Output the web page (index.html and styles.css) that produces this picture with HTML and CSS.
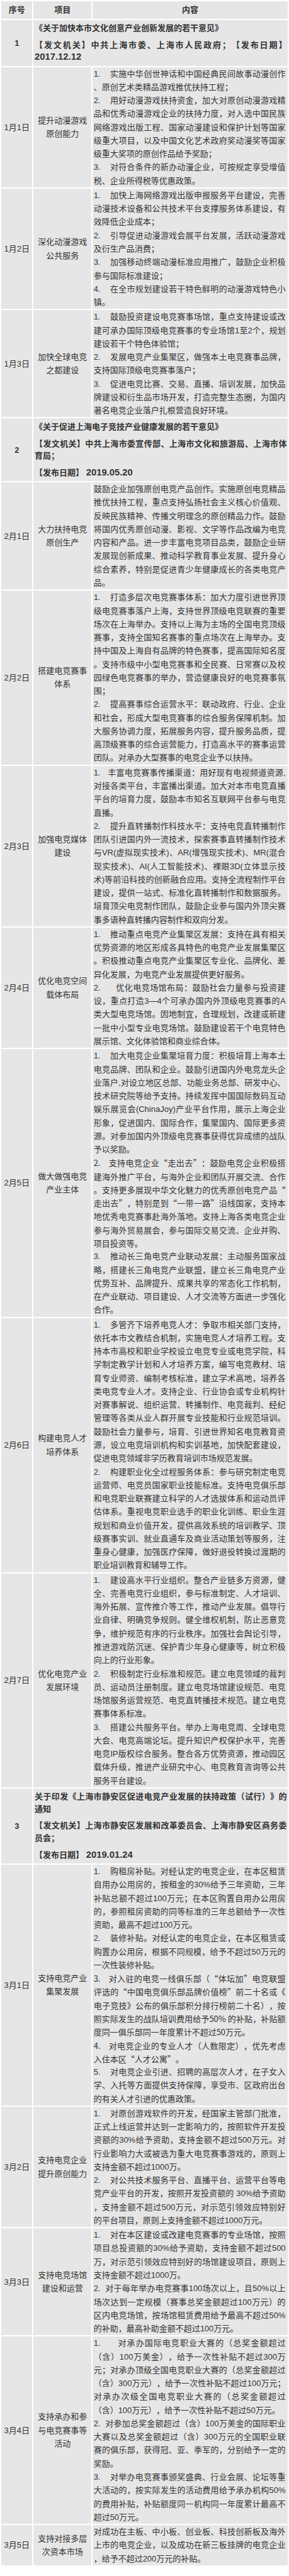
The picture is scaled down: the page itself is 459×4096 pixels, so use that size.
FILE: index.html
```html
<!DOCTYPE html>
<html lang="zh-CN">
<head>
<meta charset="utf-8">
<title>电竞产业扶持政策</title>
<link rel="stylesheet" href="styles.css">
</head>
<body>
<table class="policy">
  <colgroup>
    <col class="c-no">
    <col class="c-item">
    <col class="c-text">
  </colgroup>
  <thead>
    <tr>
      <th>序号</th>
      <th>项目</th>
      <th>内容</th>
    </tr>
  </thead>
  <tbody>
    <tr>
      <td class="num">1</td>
      <td class="doc" colspan="2">
        <p>《关于加快本市文化创意产业创新发展的若干意见》</p>
        <p>【发文机关】中共上海市委、上海市人民政府；【发布日期】<span class="date">2017.12.12</span></p>
      </td>
    </tr>
    <tr>
      <td class="day">1月1日</td>
      <td class="item">提升动漫游戏原创能力</td>
      <td class="text">
        <p>1.&nbsp;&nbsp;&nbsp;&nbsp;实施中华创世神话和中国经典民间故事动漫创作、原创艺术类精品游戏推优扶持工程；</p>
        <p>2.&nbsp;&nbsp;&nbsp;&nbsp;用好动漫游戏扶持资金，加大对原创动漫游戏精品和优秀动漫游戏企业的扶持力度，对入选中国民族网络游戏出版工程、国家动漫建设和保护计划等国家级重大项目，以及中国文化艺术政府奖动漫奖等国家级重大奖项的原创作品给予奖励；</p>
        <p>3.&nbsp;&nbsp;&nbsp;&nbsp;对符合条件的新办动漫企业，可按规定享受增值税、企业所得税等优惠政策。</p>
      </td>
    </tr>
    <tr>
      <td class="day">1月2日</td>
      <td class="item">深化动漫游戏公共服务</td>
      <td class="text">
        <p>1.&nbsp;&nbsp;&nbsp;&nbsp;加快上海网络游戏出版申报服务平台建设，完善动漫技术设备和公共技术平台支撑服务体系建设，有效降低企业成本；</p>
        <p>2.&nbsp;&nbsp;&nbsp;&nbsp;引导促进动漫游戏会展平台发展，活跃动漫游戏及衍生产品消费；</p>
        <p>3.&nbsp;&nbsp;&nbsp;&nbsp;加强移动终端动漫标准应用推广，鼓励企业积极参与国际标准建设；</p>
        <p>4.&nbsp;&nbsp;&nbsp;&nbsp;在全市规划建设若干特色鲜明的动漫游戏特色小镇。</p>
      </td>
    </tr>
    <tr>
      <td class="day">1月3日</td>
      <td class="item">加快全球电竞之都建设</td>
      <td class="text">
        <p>1.&nbsp;&nbsp;&nbsp;&nbsp;鼓励投资建设电竞赛事场馆，重点支持建设或改建可承办国际顶级电竞赛事的专业场馆1至2个，规划建设若干个特色体验馆；</p>
        <p>2.&nbsp;&nbsp;&nbsp;&nbsp;发展电竞产业集聚区，做强本土电竞赛事品牌，支持国际顶级电竞赛事落户；</p>
        <p>3.&nbsp;&nbsp;&nbsp;&nbsp;促进电竞比赛、交易、直播、培训发展，加快品牌建设和衍生品市场开发，打造完整生态圈，为国内著名电竞企业落户扎根营造良好环境。</p>
      </td>
    </tr>
    <tr>
      <td class="num">2</td>
      <td class="doc" colspan="2">
        <p>《关于促进上海电子竞技产业健康发展的若干意见》</p>
        <p>【发文机关】中共上海市委宣传部、上海市文化和旅游局、上海市体育局；</p>
        <p>【发布日期】 <span class="date">2019.05.20</span></p>
      </td>
    </tr>
    <tr>
      <td class="day">2月1日</td>
      <td class="item">大力扶持电竞原创生产</td>
      <td class="text">
        <p>鼓励企业加强原创电竞产品创作。实施原创电竞精品推优扶持工程，重点支持弘扬社会主义核心价值观、反映民族精神、传播文明理念的原创精品力作。鼓励将国内优秀原创动漫、影视、文学等作品改编为电竞内容和产品。进一步丰富电竞项目品类，鼓励企业研发展现创新成果、推动科学教育事业发展、提升身心综合素养，特别是促进青少年健康成长的各类电竞产品。</p>
      </td>
    </tr>
    <tr>
      <td class="day">2月2日</td>
      <td class="item">搭建电竞赛事体系</td>
      <td class="text">
        <p>1.&nbsp;&nbsp;&nbsp;&nbsp;打造多层次电竞赛事体系：加大力度引进世界顶级电竞赛事落户上海，支持世界顶级电竞联赛的重要场次在上海举办。支持以上海为主场的全国电竞顶级赛事，支持全国知名赛事的重点场次在上海举办。支持中国及上海自有品牌的特色赛事，提高国际知名度。支持市级中小型电竞赛事和全民赛、日常赛以及校园绿色电竞赛事的举办，营造健康良好的电竞赛事氛围；</p>
        <p>2.&nbsp;&nbsp;&nbsp;&nbsp;提高赛事综合运营水平：联动政府、行业、企业和社会，形成大型电竞赛事的综合服务保障机制。加大服务协调力度，拓展服务内容，提升服务品质，提高顶级赛事的综合运营能力，打造高水平的赛事运营团队。对承办大型赛事的电竞企业予以扶持。</p>
      </td>
    </tr>
    <tr>
      <td class="day">2月3日</td>
      <td class="item">加强电竞媒体建设</td>
      <td class="text">
        <p>1.&nbsp;&nbsp;&nbsp;丰富电竞赛事传播渠道：用好现有电视频道资源,对接各类平台，丰富播出渠道。加大对本市电竞直播平台的培育力度，鼓励本市知名互联网平台参与电竞直播。</p>
        <p>2.&nbsp;&nbsp;&nbsp;&nbsp;提升直转播制作科技水平：支持电竞直转播制作团队引进国内外一流技术，探索赛事直转播制作技术与VR(虚拟现实技术)、AR(增强现实技术)、MR(混合现实技术)、AI(人工智能技术)、裸眼3D(立体显示技术)等前沿科技的创新融合应用。支持全流程制作平台建设，提供一站式、标准化直转播制作和数据服务。培育顶尖电竞制作团队，鼓励企业参与国内外顶尖赛事多语种直转播内容制作和双向分发。</p>
      </td>
    </tr>
    <tr>
      <td class="day">2月4日</td>
      <td class="item">优化电竞空间载体布局</td>
      <td class="text">
        <p>1.&nbsp;&nbsp;&nbsp;&nbsp;推动重点电竞产业集聚区发展：支持在具有相关优势资源的地区形成各具特色的电竞产业发展集聚区。积极推动重点电竞产业集聚区专业化、品牌化、差异化发展，为电竞产业发展提供更好服务。</p>
        <p>2.&nbsp;&nbsp;&nbsp;&nbsp;&nbsp;&nbsp;优化电竞场馆布局：鼓励社会力量参与投资建设，重点打造3—4个可承办国内外顶级电竞赛事的A类大型电竞场馆。因地制宜，合理规划，改建或新建一批中小型专业电竞场馆。鼓励建设若干个电竞特色展示馆、文化体验馆和商业综合体。</p>
      </td>
    </tr>
    <tr>
      <td class="day">2月5日</td>
      <td class="item">做大做强电竞产业主体</td>
      <td class="text">
        <p>1.&nbsp;&nbsp;&nbsp;&nbsp;加大电竞企业集聚培育力度：积极培育上海本土电竞品牌、团队和企业。鼓励引进国内外电竞龙头企业落户,对设立地区总部、功能业务总部、研发中心、技术研究院等给予支持。持续发挥中国国际数码互动娱乐展览会(ChinaJoy)产业平台作用，展示上海企业形象，促进国内、国际合作，集聚国内、国际更多资源。对参加国内外顶级电竞赛事获得优异成绩的战队予以奖励。</p>
        <p class="quoted">2.&nbsp;&nbsp;&nbsp;&nbsp;支持电竞企业“走出去”：鼓励电竞企业积极搭建海外推广平台，与海外企业和团队开展交流、合作。支持更多展现中华文化魅力的优秀原创电竞产品“走出去”，特别是到“一带一路”沿线国家，支持本地优秀电竞赛事赴海外落地。支持上海各类电竞企业参与海外贸易展会，参与国际交易交流、企业并购、项目投资等。</p>
        <p>3.&nbsp;&nbsp;&nbsp;&nbsp;推动长三角电竞产业联动发展：主动服务国家战略，搭建长三角电竞产业联盟，建立长三角电竞产业优势互补、品牌提升、成果共享的常态化工作机制，在产业联动、项目建设、人才交流等方面进一步强化合作。</p>
      </td>
    </tr>
    <tr>
      <td class="day">2月6日</td>
      <td class="item">构建电竞人才培养体系</td>
      <td class="text">
        <p>1.&nbsp;&nbsp;&nbsp;&nbsp;多管齐下培养电竞人才：争取市相关部门支持，依托本市文教结合机制，实施电竞人才培养工程。支持本市高校和职业学校设立电竞专业或电竞学院，科学制定教学计划和人才培养方案，编写电竞教材、培育专业师资、编制考核标准，建立学术高地，培养各类电竞专业人才。支持企业、行业协会或专业机构针对赛事解说、组织运营、转播制作、电竞裁判、经纪管理等各类从业人群开展专业技能和行业规范培训。鼓励社会力量参与，培育、引进世界知名电竞教育资源，设立电竞培训机构和实训基地，加快配套建设，促进电竞领域非学历教育培训市场规范发展。</p>
        <p>2.&nbsp;&nbsp;&nbsp;&nbsp;构建职业化全过程服务体系：参与研究制定电竞运营师、电竞员国家职业技能标准。支持电竞俱乐部和电竞职业联赛建立科学的人才选拔体系和运动员评估体系。重视电竞职业选手的职业化训练、职业生涯规划和商业价值开发，提供高效系统的培训教学、顶级赛事实训、就业直通车及商业活动策划等服务，注重身心健康，加强医疗保障，做好退役转换过渡期的职业培训教育和辅导工作。</p>
      </td>
    </tr>
    <tr>
      <td class="day">2月7日</td>
      <td class="item">优化电竞产业发展环境</td>
      <td class="text">
        <p>1.&nbsp;&nbsp;&nbsp;&nbsp;建设高水平行业组织。整合产业链多方资源，健全、完善电竞行业组织，参与标准制定、人才培训、海外拓展、宣传推介等工作，推动产业发展。倡导行业自律、明确竞争规则。健全维权机制，防止恶意竞争，维护规范有序的行业秩序。加强社会舆论引导，推进游戏防沉迷、保护青少年身心健康等，树立积极向上的行业形象。</p>
        <p>2.&nbsp;&nbsp;&nbsp;&nbsp;积极制定行业标准和规范。建立电竞领域的裁判员、运动员注册制度。建立电竞场馆建设规范、电竞场馆服务运营规范、电竞直转播技术规范。建立电竞赛事体系标准。</p>
        <p>3.&nbsp;&nbsp;&nbsp;&nbsp;搭建公共服务平台。举办上海电竞周、全球电竞大会、电竞高端论坛。提升知识产权保护水平，完善电竞IP版权综合服务。整合各方优势资源，推动园区载体升级，推进产业研究中心、电竞教育咨询等公共服务平台建设。</p>
      </td>
    </tr>
    <tr>
      <td class="num">3</td>
      <td class="doc" colspan="2">
        <p>关于印发《上海市静安区促进电竞产业发展的扶持政策（试行）》的通知</p>
        <p>【发文机关】上海市静安区发展和改革委员会、上海市静安区商务委员会；</p>
        <p>【发布日期】 <span class="date">2019.01.24</span></p>
      </td>
    </tr>
    <tr>
      <td class="day">3月1日</td>
      <td class="item">支持电竞产业集聚发展</td>
      <td class="text">
        <p>1.&nbsp;&nbsp;&nbsp;&nbsp;购租房补贴。对经认定的电竞企业，在本区租赁自用办公用房的，按租金的30%给予三年资助，三年补贴总额不超过100万元；在本区购置自用办公用房的，参照租房资助的同等标准的三年总额给予一次性资助，最高不超过100万元。</p>
        <p>2.&nbsp;&nbsp;&nbsp;&nbsp;装修补贴。对经认定的电竞企业，在本区租赁或购置办公用房，根据不同规模，给予不超过50万元的一次性装修补贴。</p>
        <p class="quoted">3.&nbsp;&nbsp;&nbsp;&nbsp;对入驻的电竞一线俱乐部（“体坛加”电竞联盟评选的“中国电竞俱乐部品牌价值榜”前二十名或《电子竞技》公布的俱乐部积分排行榜前二十名），按照实际发生的战队培训费用给予50% 的补贴，补贴额度同一俱乐部同一年度累计不超过50万元。</p>
        <p class="quoted">4.&nbsp;&nbsp;&nbsp;&nbsp;对电竞企业的专业人才（人数限定），优先考虑入住本区“人才公寓”。</p>
        <p>5.&nbsp;&nbsp;&nbsp;&nbsp;对电竞企业引进、招聘的高层次人才，在子女入学、入托等方面提供支持保障，享受市、区政府出台的有关人才引进的优惠政策。</p>
      </td>
    </tr>
    <tr>
      <td class="day">3月2日</td>
      <td class="item">支持电竞企业提升原创能力</td>
      <td class="text">
        <p>1.&nbsp;&nbsp;&nbsp;&nbsp;对原创游戏软件的开发，经国家主管部门批准，正式上线运营并达到一定影响力的，按照软件开发投资额的30%给予资助，支持金额不超过500万元。对行业影响力大或被选为重大电竞赛事游戏的，原则上支持金额不超过1000万。</p>
        <p>2.&nbsp;&nbsp;&nbsp;&nbsp;对公共技术服务平台、直播平台、运营平台等电竞产业平台的开发，按照开发投资额的 30%给予资助，支持金额不超过500万元，对示范引领效应特别好的平台项目，原则上支持金额不超过1000万元。</p>
      </td>
    </tr>
    <tr>
      <td class="day">3月3日</td>
      <td class="item">支持电竞场馆建设和运营</td>
      <td class="text">
        <p>1.&nbsp;&nbsp;&nbsp;&nbsp;对在本区建设或改建电竞赛事的专业场馆，按照项目总投资额的30%给予资助，支持金额不超过500万，对示范引领效应特别好的场馆建设项目，原则上支持金额不超过1000万。</p>
        <p>2.&nbsp;&nbsp;对于每年举办电竞赛事100场次以上，且50%以上场次达到一定规模（赛事总奖金额超过100万元）的区内电竞场馆，按场馆租赁费用给予最高不超过50%的补助，最高补助金额不超过100万元。</p>
      </td>
    </tr>
    <tr>
      <td class="day">3月4日</td>
      <td class="item">支持承办和参与电竞赛事等活动</td>
      <td class="text text-kinsoku">
        <p>1.&nbsp;&nbsp;&nbsp;&nbsp;&nbsp;&nbsp;对承办国际电竞职业大赛的（总奖金额超过（含）100万美金），给予一次性补贴不超过300万元；对承办顶级全国电竞职业大赛的（总奖金额超过（含）300万元），给予一次性补贴不超过100万元；对承办次级全国电竞职业大赛的（总奖金额超过（含）100万元），给予一次性补贴不超过50万元。</p>
        <p>2.&nbsp;&nbsp;对参加总奖金额超过（含）100万美金的国际职业大赛以及总奖金额超过（含）300万元的全国职业联赛的俱乐部，获得冠、亚、季军的，分别给予一定的奖励。</p>
        <p>3.&nbsp;&nbsp;&nbsp;&nbsp;对举办电竞赛事颁奖盛典、行业会展、论坛等重大活动的，按实际发生的活动费用给予承办机构50%的费用补贴，补贴额度同一机构同一年度累计最高不超过50万元。</p>
      </td>
    </tr>
    <tr>
      <td class="day">3月5日</td>
      <td class="item">支持对接多层次资本市场</td>
      <td class="text">
        <p>对成功在主板、中小板、创业板、科技创新板及海外上市的电竞企业，以及成功在新三板挂牌的电竞企业，给予不超过200万元的补贴。</p>
      </td>
    </tr>
  </tbody>
</table>
</body>
</html>
```

FILE: styles.css
```css
* {
  box-sizing: border-box;
  margin: 0;
  padding: 0;
}

html,
body {
  background: #ffffff;
}

body {
  width: 459px;
  font-family: "Liberation Sans", "Noto Sans CJK SC", sans-serif;
  font-size: 13px;
  color: #333333;
  text-spacing-trim: space-all;
  text-autospace: no-autospace;
}

.policy {
  width: 459px;
  table-layout: fixed;
  border-collapse: separate;
  border-spacing: 2.7px 2.78px;
}

.c-no {
  width: 49.2px;
}

.c-item {
  width: 91.2px;
}

.c-text {
  width: 307.8px;
}

.policy th,
.policy td {
  background: #e6e6e6;
  vertical-align: middle;
}

.policy th {
  font-weight: bold;
  text-align: center;
  line-height: 21.3px;
  padding: 3.25px 0;
}

.num {
  font-weight: bold;
  text-align: center;
  line-height: 21.3px;
}

.day {
  text-align: center;
  line-height: 21.27px;
}

.item {
  text-align: center;
  line-height: 21.27px;
  padding: 0 2px;
}

.text {
  line-height: 21.27px;
  text-align: justify;
  line-break: anywhere;
  padding: 0 3.4px 0 1.4px;
}

.text-kinsoku {
  line-break: normal;
}

.quoted {
  font-family: "Noto Sans CJK SC", "Liberation Sans", sans-serif;
}

.doc {
  font-weight: bold;
  text-align: justify;
  line-height: 19.5px;
  padding: 3.2px 1.6px 3.7px;
}

.doc p + p {
  margin-top: 7.4px;
}

.date {
  font-size: 14.8px;
}
```
